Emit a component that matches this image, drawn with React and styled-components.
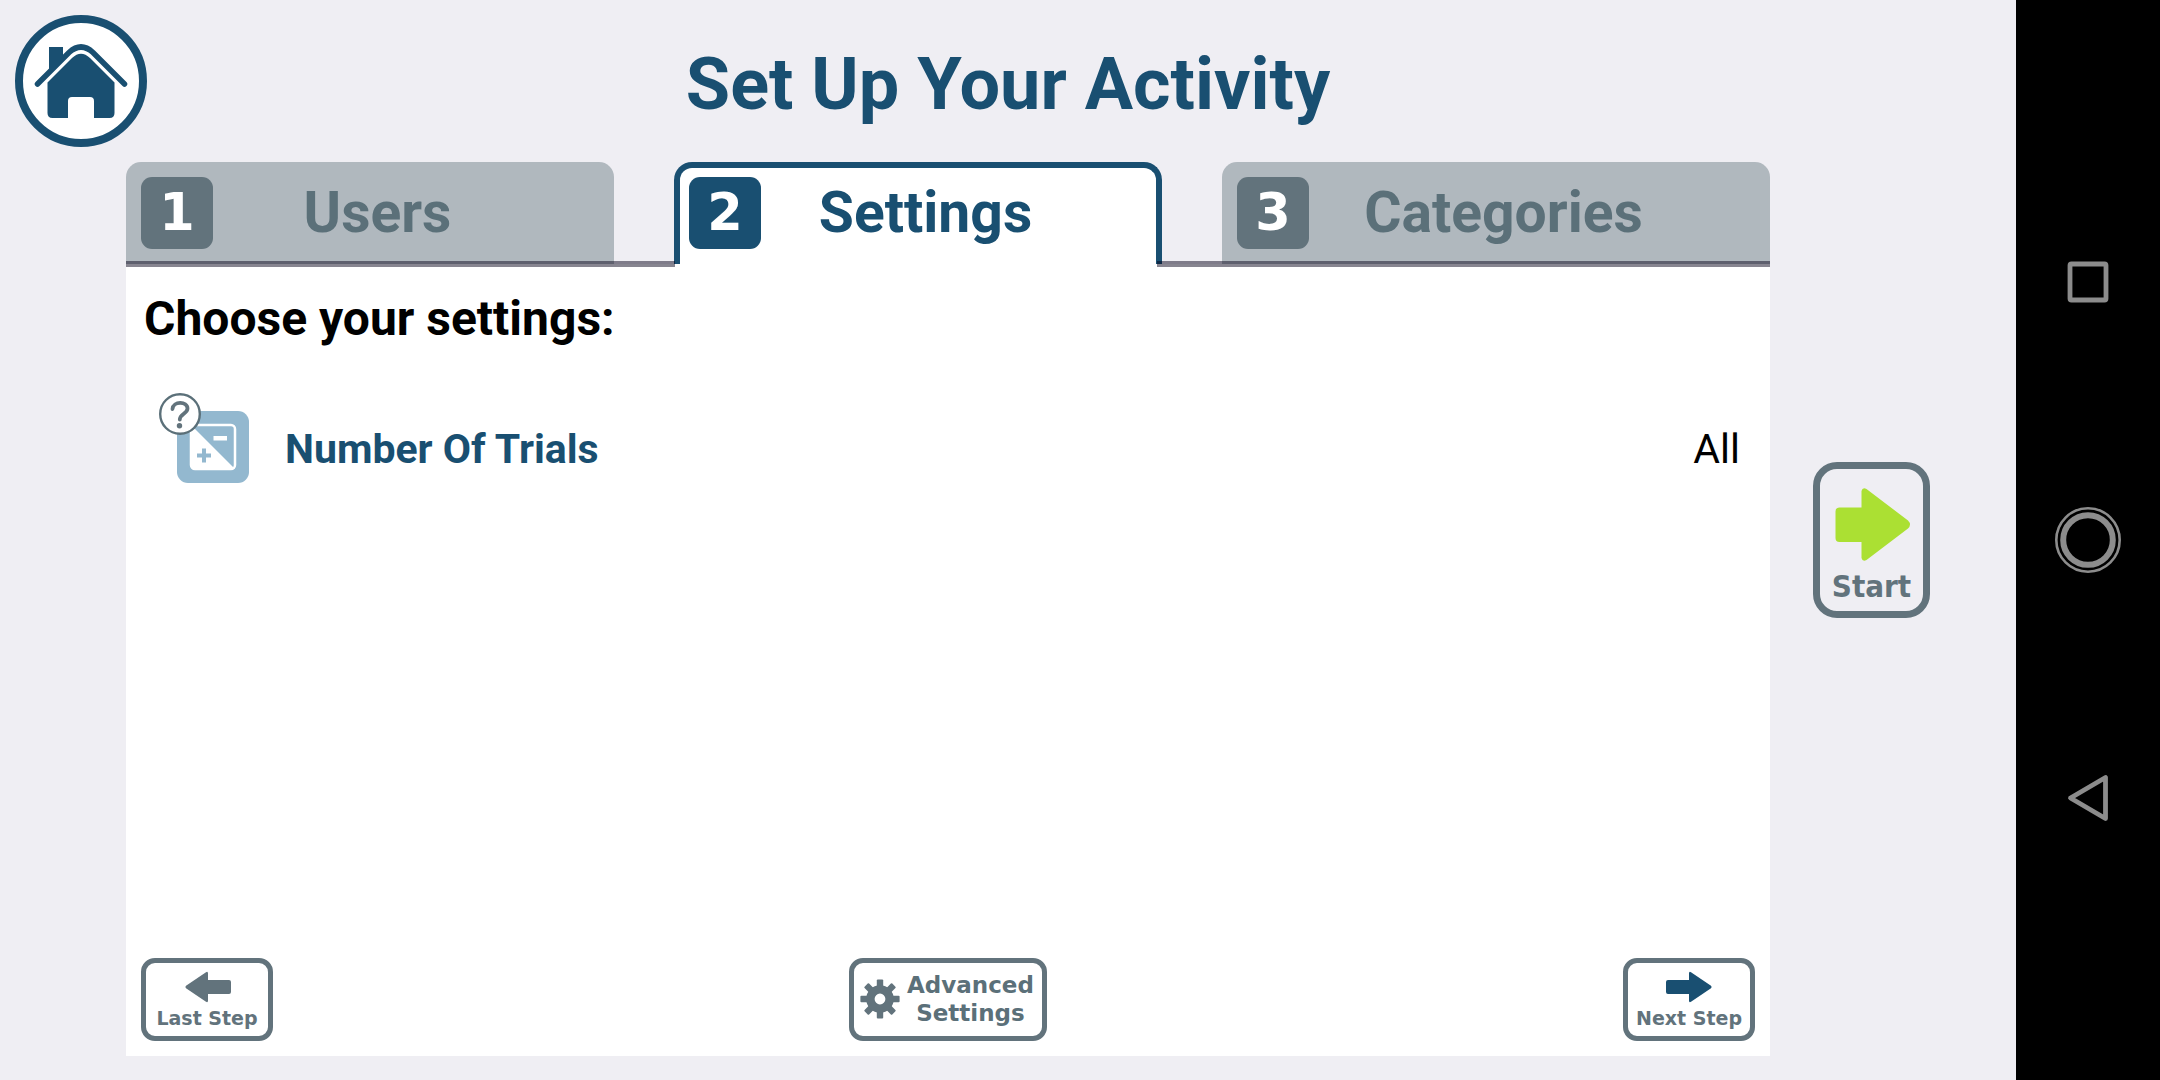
import React from "react";
import styled, { createGlobalStyle } from "styled-components";

const navy = "#194f71";
const slate = "#62737c";
const verdana = `Verdana, "DejaVu Sans", sans-serif`;

const GlobalStyle = createGlobalStyle`
  * { box-sizing: border-box; }
  body { margin: 0; background: #efeef3; font-family: Roboto, sans-serif; }
  button { font: inherit; color: inherit; background: none; border: 0; padding: 0; cursor: pointer; }
  svg { display: block; }
`;

const Device = styled.div`
  display: grid;
  grid-template-columns: 1fr 144px;
  min-height: 100vh;
`;

const Screen = styled.div`
  display: grid;
  grid-template-columns: 126px 1fr 246px;
  grid-template-rows: 162px 1fr;
  padding-bottom: 24px;
`;

const Header = styled.header`
  grid-column: 1 / -1;
  grid-row: 1;
  display: grid;
  grid-template-columns: 132px 1fr 132px;
  align-items: center;
  padding: 0 15px;
`;

const HomeButton = styled.button`
  width: 132px;
  height: 132px;
`;

const Title = styled.h1`
  margin: 0;
  padding-top: 8px;
  text-align: center;
  color: ${navy};
  font-size: 72px;
  line-height: 84px;
  font-weight: 700;
`;

const Main = styled.main`
  grid-column: 2;
  grid-row: 2;
  display: flex;
  flex-direction: column;
`;

const TabList = styled.div`
  display: grid;
  grid-template-columns: 488fr 488fr 548fr;
  gap: 60px;
`;

const Tab = styled.button`
  display: flex;
  align-items: center;
  height: 102px;
  padding: ${(p) => (p.$active ? "9px 0 15px 9px" : "15px 0 15px 15px")};
  border: ${(p) => (p.$active ? `6px solid ${navy}` : "0")};
  border-bottom: 0;
  border-radius: ${(p) => (p.$active ? "18px 18px 0 0" : "15px 15px 0 0")};
  background: ${(p) => (p.$active ? "#fff" : "#b0b8be")};
  color: ${(p) => (p.$active ? navy : "#5b7079")};
`;

const StepNumber = styled.span`
  flex: none;
  width: 72px;
  height: 72px;
  border-radius: 11px;
  background: ${(p) => (p.$active ? navy : slate)};
  color: #fff;
  font: 700 51px/72px ${verdana};
  text-align: center;
`;

const TabLabel = styled.span`
  flex: 1;
  padding-right: ${(p) => (p.$active ? "66px" : "72px")};
  text-align: center;
  font-size: 57px;
  line-height: 72px;
  font-weight: 700;
`;

const Rules = styled.div`
  position: relative;
  display: grid;
  grid-template-columns: 549fr 613fr;
  gap: 482px;
  margin: -3px 0;
`;

const Rule = styled.div`
  height: 6px;
  background: rgba(4, 0, 24, 0.48);
`;

const Panel = styled.section`
  flex: 1;
  display: flex;
  flex-direction: column;
  padding: 27px 15px 15px;
  background: #fff;
`;

const PanelTitle = styled.h2`
  margin: 0 0 38px;
  padding-left: 3px;
  color: #000;
  font-size: 48px;
  line-height: 56px;
  font-weight: 700;
`;

const SettingRow = styled.div`
  display: flex;
  align-items: center;
  gap: 36px;
  min-height: 128px;
  padding: 0 15px 0 18px;
  font-size: 41px;
  line-height: 48px;
`;

const HelpButton = styled.button`
  width: 90px;
  height: 90px;
  margin-bottom: 22px;
`;

const SettingName = styled.span`
  flex: 1;
  color: ${navy};
  font-weight: 700;
`;

const SettingValue = styled.span`
  color: #000;
`;

const Footer = styled.footer`
  display: grid;
  grid-template-columns: 1fr auto 1fr;
  margin-top: auto;
`;

const StepButton = styled.button`
  display: flex;
  flex-direction: column;
  align-items: center;
  justify-self: ${(p) => p.$side};
  width: 132px;
  height: 83px;
  padding-top: 8px;
  border: 5px solid ${slate};
  border-radius: 14px;
  color: ${slate};
  font: 700 19px/30px ${verdana};
  white-space: nowrap;
`;

const AdvancedButton = styled.button`
  display: flex;
  align-items: center;
  gap: 7px;
  width: 198px;
  height: 83px;
  padding: 0 0 2px 6px;
  border: 5px solid ${slate};
  border-radius: 14px;
  color: #5b7079;
  font: 700 23px/28px ${verdana};
  text-align: center;
`;

const StartButton = styled.button`
  grid-column: 3;
  grid-row: 1 / -1;
  align-self: center;
  display: flex;
  flex-direction: column;
  align-items: center;
  width: 117px;
  height: 156px;
  margin: 24px 0 0 43px;
  padding-top: 19px;
  border: 7px solid ${slate};
  border-radius: 24px;
  color: ${slate};
  font: 700 31px/50px "DejaVu Sans Condensed", "DejaVu Sans", sans-serif;
  font-stretch: condensed;
`;

const SystemBar = styled.nav`
  display: flex;
  flex-direction: column;
  align-items: center;
  justify-content: center;
  gap: 192px;
  background: #000;
`;

const SystemButton = styled.button`
  width: 66px;
  height: 66px;
`;

const HomeIcon = () => (
  <svg width="132" height="132" viewBox="0 0 132 132">
    <circle cx="66" cy="66" r="62" fill="#fff" stroke={navy} strokeWidth="8" />
    <path d="M34 32h14v14L34 60z" fill={navy} />
    <path d="M22.500 69 L54 37.500 Q66 26.500 78 37.500 L109.500 69" fill="none" stroke={navy} strokeWidth="5.500" strokeLinecap="round" />
    <path d="M32.500 67.500 L57 43 Q66 34.500 75 43 L99.500 67.500 V98 Q99.500 103 94.500 103 H79 V86 Q79 82 75 82 H57 Q53 82 53 86 V103 H37.500 Q32.500 103 32.500 98Z" fill={navy} />
  </svg>
);

const HelpIcon = () => (
  <svg width="90" height="90" viewBox="0 0 90 90">
    <rect x="18" y="18" width="72" height="72" rx="11" fill="#93b8cf" />
    <rect x="32" y="32" width="44" height="44" rx="4" fill="none" stroke="#fff" strokeWidth="2.500" />
    <path d="M32 32L76 76H36Q32 76 32 72Z" fill="#fff" />
    <path d="M54.500 43h13.500v4.500h-13.500z" fill="#fff" />
    <path d="M38 62.500h14M45 55.500v14" stroke="#93b8cf" strokeWidth="4" />
    <circle cx="21" cy="21" r="19.800" fill="#fff" stroke="#5b7079" strokeWidth="2.400" />
    <path d="M13.500 16C14 8 28.500 8 28.500 15.500C28.500 20.500 20.800 21 20.800 26.500" fill="none" stroke={slate} strokeWidth="3.800" strokeLinecap="round" />
    <circle cx="20.500" cy="32.800" r="2.700" fill={slate} />
  </svg>
);

const SmallArrow = ({ color, left }) => (
  <svg width="48" height="32" viewBox="-1 0 48 32">
    <path
      transform={left ? "matrix(-1 0 0 1 47 0)" : undefined}
      d="M2 9H23V2.500Q23 0 25 1.200L45 14.700Q46.300 16 45 17.300L25 30.800Q23 32 23 29.500V23H2Q0 23 0 21V11Q0 9 2 9Z"
      fill={color}
    />
  </svg>
);

const StartArrow = () => (
  <svg width="76" height="73" viewBox="-1 0 76 73">
    <path d="M4.500 19.500H26.500V3Q27.500-1 31.500 1L73 32.500Q77 36.500 73 40.500L31.500 72Q27.500 74 26.500 70V54H4.500Q.5 54 .5 50V23.500Q.5 19.500 4.500 19.500Z" fill="#abe033" />
  </svg>
);

const GearIcon = () => (
  <svg width="40" height="40" viewBox="-20 -20 40 40">
    <g fill={slate}>
      {[0, 45, 90, 135, 180, 225, 270, 315].map((a) => (
        <rect key={a} x="-3.200" y="-19.600" width="6.400" height="12" rx="1" transform={`rotate(${a})`} />
      ))}
    </g>
    <circle r="9.600" fill="none" stroke={slate} strokeWidth="8.400" />
  </svg>
);

const tabs = ["Users", "Settings", "Categories"];
const current = 1;

export default function App() {
  return (
    <>
      <GlobalStyle />
      <Device>
        <Screen>
          <Header>
            <HomeButton aria-label="Home"><HomeIcon /></HomeButton>
            <Title>Set Up Your Activity</Title>
          </Header>
          <Main>
            <TabList role="tablist">
              {tabs.map((label, i) => (
                <Tab key={label} role="tab" aria-selected={i === current} $active={i === current}>
                  <StepNumber $active={i === current}>{i + 1}</StepNumber>
                  <TabLabel $active={i === current}>{label}</TabLabel>
                </Tab>
              ))}
            </TabList>
            <Rules>
              <Rule />
              <Rule />
            </Rules>
            <Panel role="tabpanel">
              <PanelTitle>Choose your settings:</PanelTitle>
              <SettingRow>
                <HelpButton aria-label="About number of trials"><HelpIcon /></HelpButton>
                <SettingName>Number Of Trials</SettingName>
                <SettingValue>All</SettingValue>
              </SettingRow>
              <Footer>
                <StepButton $side="start">
                  <SmallArrow color={slate} left />
                  Last Step
                </StepButton>
                <AdvancedButton>
                  <GearIcon />
                  <span>Advanced<br />Settings</span>
                </AdvancedButton>
                <StepButton $side="end">
                  <SmallArrow color={navy} />
                  Next Step
                </StepButton>
              </Footer>
            </Panel>
          </Main>
          <StartButton>
            <StartArrow />
            Start
          </StartButton>
        </Screen>
        <SystemBar>
          <SystemButton aria-label="Recent apps">
            <svg width="66" height="66" viewBox="0 0 66 66">
              <rect x="15" y="15" width="36" height="36" rx="1.500" fill="none" stroke="#8c8c8c" strokeWidth="4.800" />
            </svg>
          </SystemButton>
          <SystemButton aria-label="Device home">
            <svg width="66" height="66" viewBox="0 0 66 66" fill="none" stroke="#8c8c8c">
              <circle cx="33" cy="33" r="31.700" strokeWidth="2.600" />
              <circle cx="33" cy="33" r="24.800" strokeWidth="6" />
            </svg>
          </SystemButton>
          <SystemButton aria-label="Back">
            <svg width="66" height="66" viewBox="0 0 66 66">
              <path d="M50.500 12.500V53.500L15.500 33Z" fill="none" stroke="#8c8c8c" strokeWidth="4.800" strokeLinejoin="round" />
            </svg>
          </SystemButton>
        </SystemBar>
      </Device>
    </>
  );
}
